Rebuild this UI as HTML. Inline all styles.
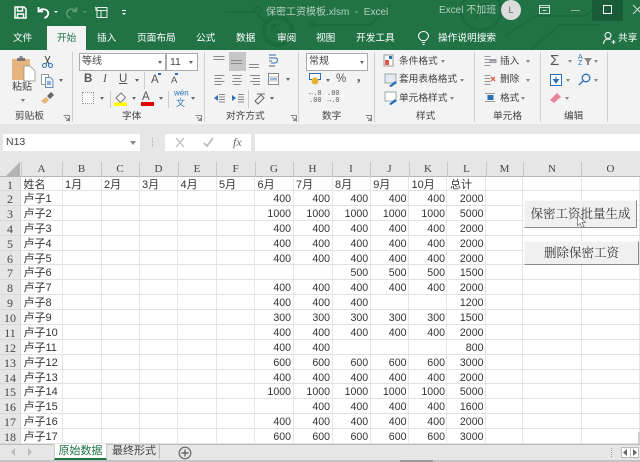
<!DOCTYPE html>
<html lang="zh"><head><meta charset="utf-8"><title>保密工资模板</title>
<style>
*{box-sizing:border-box}
html,body{margin:0;padding:0}
body{width:640px;height:462px;overflow:hidden;position:relative;background:#fff;font-family:"Liberation Sans","Noto Sans CJK SC",sans-serif}
.a{position:absolute;white-space:nowrap}
.t{position:absolute;white-space:nowrap;font-size:9.7px;line-height:14px;color:#444}
.tab{position:absolute;top:32px;font-size:9.7px;line-height:14px;color:#fff;white-space:nowrap}
.sep{position:absolute;top:52px;width:1px;height:70px;background:#cfcfcf}
.ar{position:absolute;width:0;height:0;border-left:2.5px solid transparent;border-right:2.5px solid transparent;border-top:3px solid #666}
.aw{position:absolute;width:0;height:0;border-left:2px solid transparent;border-right:2px solid transparent;border-top:2px solid #fff}
svg{position:absolute;overflow:visible}
#grid{position:absolute;left:0;top:177px;display:grid;width:640px;grid-template-columns:21px 41.5px 39px 38px 38.5px 38.5px 38.5px 38.5px 39px 38.2px 38.3px 38.5px 38.5px 37px 58.7px 58.3px;grid-template-rows:14px repeat(17,14.88px);font-size:10.6px;color:#333}
#grid>b,#grid>i,#grid>u,#grid>s{display:block;border-right:1px solid #e6e6e6;border-bottom:1px solid #e2e2e2;line-height:16px;font-style:normal;font-weight:400;text-decoration:none;white-space:nowrap;overflow:hidden;height:100%}
#grid>b{background:#e6e6e6;border-color:#d8d8d8;text-align:center;font-family:"Liberation Serif",serif;font-size:12px;color:#444}
#grid>u{text-align:right;padding-right:1.5px}
#grid>s{text-align:left;padding-left:2.5px;font-size:11px}
.ch{position:absolute;top:162px;font-family:"Liberation Serif",serif;font-size:11px;line-height:14px;color:#444;text-align:center}
.cl{position:absolute;top:162px;width:1px;height:15px;background:#c8c8c8}
.btn{position:absolute;background:#f0f0f0;border-right:1px solid #8a8a8a;border-bottom:1px solid #8a8a8a;border-top:1px solid #fafafa;border-left:1px solid #fafafa;font-family:"Liberation Serif","Noto Serif CJK SC",serif;color:#333;text-align:center;white-space:nowrap}
</style></head><body>

<!-- title + tabs band -->
<div class="a" style="left:0;top:0;width:640px;height:50px;background:#217346"></div>
<svg style="left:0;top:0" width="640" height="50" fill="none" stroke="#1c6a3f" stroke-width="2">
<circle cx="278" cy="31" r="14" stroke-width="4"/><path d="M272 25l12 12M272 25h8M272 25v8"/>
<circle cx="481" cy="10" r="20" stroke-width="3"/><path d="M474 18l14-14M488 4h-8M488 4v8"/>
<path d="M225 12h30l12 12M310 25h60l20-20M505 36l30-20h50l20-16M530 50l30-25h40M320 12h-20M258 6l-6 6"/>
<circle cx="258" cy="10" r="3"/><circle cx="312" cy="24" r="3"/>
</svg>
<div class="a" style="left:592px;top:0;width:31px;height:21px;background:#1a5c38"></div>

<!-- QAT -->
<svg style="left:14px;top:6px" width="13" height="13" viewBox="0 0 13 13" fill="none" stroke="#fff" stroke-width="1.5"><path d="M1 1h9l2 2v9H1zM3.5 1v4h5V1M3.5 12V8h6v4"/></svg>
<svg style="left:37px;top:6px" width="13" height="13" viewBox="0 0 13 13" fill="none" stroke="#fff" stroke-width="1.8"><path d="M1.5 1v4.5H6M2 5.2C4 2.5 9 2.5 10.8 5.5c1.2 2.5-.2 5.5-3.3 6.5"/></svg>
<div class="aw" style="left:54px;top:11px"></div>
<svg style="left:65px;top:6px" width="13" height="13" viewBox="0 0 13 13" fill="none" stroke="#5a9a78" stroke-width="1.6"><path d="M11.5 1v4.5H7M11 5.2C9 2.5 4 2.5 2.2 5.5c-1.2 2.5.2 5.5 3.3 6.5"/></svg>
<div class="aw" style="left:83px;top:11px;border-top-color:#5a9a78"></div>
<svg style="left:94px;top:6px" width="14" height="12" viewBox="0 0 14 12" fill="none" stroke="#e8f0ea" stroke-width="1"><path d="M3 1.5h10v10H3zM3 4.5h10M7 4.5v7M1 1l2 3 M1 4h2"/></svg>
<svg style="left:122px;top:10px" width="5" height="6" fill="#fff"><rect x="0" y="0" width="4" height="1"/><path d="M0 3h4L2 5z"/></svg>

<!-- title -->
<div class="a" style="left:266px;top:5px;font-size:10px;line-height:15px;color:#b4d0bf">保密工资模板.xlsm&nbsp; -&nbsp; Excel</div>
<div class="a" style="left:439px;top:3px;font-size:10px;line-height:15px;color:#b4d0bf">Excel 不加班</div>
<div class="a" style="left:501px;top:0;width:20px;height:20px;border-radius:50%;background:#dcdcdc;color:#666;font-size:9px;line-height:20px;text-align:center">L</div>
<svg style="left:539px;top:5px" width="12" height="10" fill="none" stroke="#cfe0d6"><path d="M.5.5h10v8H.5zM.5 2.5h10M3.5 5.5h4"/></svg>
<div class="a" style="left:571px;top:10px;width:9px;height:1px;background:#8fb6a0"></div>
<div class="a" style="left:603px;top:5px;width:9px;height:9px;border:1px solid #fff"></div>
<svg style="left:633px;top:5px" width="9" height="10" stroke="#cfe0d6"><path d="M0 0l9 9M9 0l-9 9"/></svg>

<!-- tabs -->
<div class="a" style="left:47px;top:26px;width:39px;height:24px;background:#f3f3f3"></div>
<div class="tab" style="left:13px">文件</div>
<div class="tab" style="left:57px;color:#217346">开始</div>
<div class="tab" style="left:97px">插入</div>
<div class="tab" style="left:137px">页面布局</div>
<div class="tab" style="left:196px">公式</div>
<div class="tab" style="left:236px">数据</div>
<div class="tab" style="left:277px">审阅</div>
<div class="tab" style="left:316px">视图</div>
<div class="tab" style="left:356px">开发工具</div>
<svg style="left:418px;top:31px" width="11" height="14" fill="none" stroke="#fff"><path d="M3.5 9.5C1.5 8 .5 6.500 .5 5a5 4.500 0 0 1 10 0c0 1.500-1 3-3 4.500zM4 11.500h3M4.500 13.500h2"/></svg>
<div class="tab" style="left:438px">操作说明搜索</div>
<svg style="left:603px;top:32px" width="13" height="13" fill="none" stroke="#fff"><circle cx="5" cy="3.500" r="3"/><path d="M.5 12c0-3 2-5 4.500-5 1 0 2 .3 2.500 1M10.500 8v4M8.500 10h4"/></svg>
<div class="tab" style="left:618px">共享</div>

<!-- ribbon -->
<div class="a" style="left:0;top:50px;width:640px;height:74px;background:#f3f3f3"></div>
<div class="sep" style="left:72px"></div><div class="sep" style="left:204px"></div><div class="sep" style="left:298px"></div><div class="sep" style="left:374px"></div><div class="sep" style="left:474px"></div><div class="sep" style="left:540px"></div><div class="sep" style="left:607px"></div>

<!-- clipboard -->
<svg style="left:11px;top:55px" width="25" height="27"><path d="M1 4h18v21H1z" fill="#e6b57e"/><path d="M6 3h8v3H6z" fill="#777"/><path d="M8.500 1h3v2h-3z" fill="#888"/><path d="M13 11h6l5 5v10H13z" fill="#fff" stroke="#888" stroke-width=".7"/></svg>
<div class="t" style="left:12px;top:81px;font-size:10px">粘贴</div>
<div class="ar" style="left:21px;top:99px;border-top-color:#777"></div>
<svg style="left:42px;top:55px" width="11" height="13" fill="none" stroke="#444"><path d="M3 1l4 8M8 1L4 9"/><circle cx="2.500" cy="10.500" r="2" stroke="#2b6fb8"/><circle cx="8.500" cy="10.500" r="2" stroke="#2b6fb8"/></svg>
<svg style="left:41px;top:74px" width="13" height="14" fill="#fff" stroke="#999"><path d="M.5.500h7v10h-7z"/><path d="M4.500 3.500h5l2.500 2.500v7.500H4.500z" fill="#eef3f8" stroke="#6c8fb5"/><path d="M6 8h4M6 10h4" stroke="#2b6fb8"/></svg>
<div class="ar" style="left:59px;top:79px"></div>
<svg style="left:41px;top:92px" width="13" height="12"><path d="M0 9l5-4 3 3-4 4z" fill="#e6b57e"/><path d="M6 4l4-4 3 3-4 4z" fill="#666"/></svg>
<div class="t" style="left:15px;top:110px">剪贴板</div>
<svg style="left:63px;top:115px" width="7" height="7" fill="none" stroke="#888"><path d="M.5.500h6v6M2 2l3.500 3.500M5.500 3v2.500H3"/></svg>

<!-- font -->
<div class="a" style="left:79px;top:53px;width:87px;height:18px;background:#fff;border:1px solid #ababab"></div>
<div class="a" style="left:166px;top:53px;width:32px;height:18px;background:#fff;border:1px solid #ababab"></div>
<div class="t" style="left:82px;top:55px;font-size:10px">等线</div>
<div class="t" style="left:170px;top:55px;font-size:10.500px">11</div>
<div class="ar" style="left:158px;top:61px"></div><div class="ar" style="left:189px;top:61px"></div>
<div class="a" style="left:84px;top:71px;font:bold 11.5px/16px 'Liberation Sans',sans-serif;color:#555">B</div>
<div class="a" style="left:103px;top:71px;font:italic 11.500px/16px 'Liberation Serif',serif;color:#555">I</div>
<div class="a" style="left:119px;top:71px;font:11.500px/16px 'Liberation Sans',sans-serif;color:#555;text-decoration:underline">U</div>
<div class="ar" style="left:135px;top:79px"></div>
<div class="a" style="left:144px;top:72px;width:1px;height:17px;background:#ccc"></div>
<div class="a" style="left:151px;top:72px;font:11.500px/16px 'Liberation Sans',sans-serif;color:#555">A</div><div class="a" style="left:158px;top:73px;width:3px;height:2px;background:#2b6fb8"></div>
<div class="a" style="left:171px;top:73px;font:9.500px/16px 'Liberation Sans',sans-serif;color:#555">A</div><div class="a" style="left:175px;top:73px;width:3px;height:2px;background:#2b6fb8"></div>
<div class="a" style="left:82px;top:92px;width:12px;height:12px;border:1px dotted #999;background:#fbfbfb"></div>
<div class="ar" style="left:100px;top:97px"></div>
<div class="a" style="left:110px;top:91px;width:1px;height:17px;background:#ccc"></div>
<svg style="left:114px;top:91px" width="14" height="14"><path d="M2 7l5-5 4.500 4.500-5 5z" fill="#fff" stroke="#777"/><path d="M0 0" /><rect x="0" y="11.500" width="13" height="3.500" fill="#ff0"/></svg>
<div class="ar" style="left:132px;top:97px"></div>
<div class="a" style="left:142px;top:89px;font:11.500px/16px 'Liberation Sans',sans-serif;color:#555">A</div><div class="a" style="left:141px;top:102px;width:13px;height:3.500px;background:#e60000"></div>
<div class="ar" style="left:159px;top:97px"></div>
<div class="a" style="left:168px;top:91px;width:1px;height:17px;background:#ccc"></div>
<div class="a" style="left:174px;top:89px;font:10px/11px 'Liberation Sans','Noto Sans CJK SC',sans-serif;color:#2b6fb8;transform:scale(.8);transform-origin:0 0">wén</div>
<div class="a" style="left:176px;top:97px;font:9px/11px 'Noto Sans CJK SC',sans-serif;color:#2b6fb8">文</div>
<div class="ar" style="left:191px;top:97px"></div>
<div class="t" style="left:122px;top:110px">字体</div>
<svg style="left:195px;top:115px" width="7" height="7" fill="none" stroke="#888"><path d="M.5.500h6v6M2 2l3.500 3.500M5.500 3v2.500H3"/></svg>

<!-- align -->
<div class="a" style="left:229px;top:52px;width:17px;height:19px;background:#c6c6c6"></div>
<svg style="left:213px;top:55px" width="70" height="14" stroke="#888" fill="none"><path d="M.5 1.500h11M.5 4.500h11M18 5.500h11M18 8.500h11M36 9.500h10M36 12.500h10" stroke-width="1"/></svg>
<svg style="left:268px;top:54px" width="10" height="14" fill="none" stroke="#666"><path d="M1 1h7M1 4h7c2 0 2 5-1 5H3" stroke="#2b6fb8"/><path d="M1 7h3M1 12h6"/></svg>
<svg style="left:214px;top:74px" width="56" height="11" stroke="#888"><path d="M.5 1.500h10M.5 4.500h7M.5 7.500h10M.5 10.500h7M18 1.500h10M19.500 4.500h7M18 7.500h10M19.500 10.500h7M36 1.500h10M39 4.500h7M36 7.500h10M39 10.500h7"/></svg>
<svg style="left:268px;top:73px" width="11" height="12" fill="#fff" stroke="#888"><path d="M.5.500h10v11H.5z"/><path d="M.5 4h10M.5 8h10" stroke="#bbb"/><path d="M2 6h7" stroke="#2b6fb8"/></svg>
<div class="ar" style="left:286px;top:78px"></div>
<svg style="left:214px;top:93px" width="30" height="10" fill="none"><path d="M5 1.500h6M5 4h6M5 6.500h6M5 9h6M24 1.500h6M24 4h6M24 6.500h6M24 9h6" stroke="#888"/><path d="M0 5l4-3v6zM18 2v6l4-3z" fill="#2b6fb8"/></svg>
<div class="a" style="left:248px;top:90px;width:1px;height:18px;background:#ccc"></div>
<svg style="left:254px;top:92px" width="12" height="12" fill="none" stroke="#666"><path d="M1 9l6-6 3 3-6 6zM3 2l8 0"/></svg>
<div class="ar" style="left:270px;top:97px"></div>
<div class="t" style="left:226px;top:110px">对齐方式</div>
<svg style="left:290px;top:115px" width="7" height="7" fill="none" stroke="#888"><path d="M.5.500h6v6M2 2l3.500 3.500M5.500 3v2.500H3"/></svg>

<!-- number -->
<div class="a" style="left:306px;top:53px;width:62px;height:18px;background:#fff;border:1px solid #ababab"></div>
<div class="t" style="left:309px;top:55px;font-size:10px">常规</div>
<div class="ar" style="left:360px;top:61px"></div>
<svg style="left:309px;top:73px" width="12" height="12"><rect x=".5" y=".5" width="11" height="6" fill="#fff" stroke="#2b6fb8"/><circle cx="6" cy="8" r="3.500" fill="#e8b030"/></svg>
<div class="ar" style="left:326px;top:79px"></div>
<div class="a" style="left:336px;top:71px;font:11.500px/16px 'Liberation Sans',sans-serif;color:#555">%</div>
<div class="a" style="left:357px;top:70px;font:bold 14px/16px 'Liberation Serif',serif;color:#555">,</div>
<div class="a" style="left:309px;top:91px;font:7px/7px 'Liberation Mono',monospace;color:#555">←.0<br>.00</div>
<div class="a" style="left:327px;top:91px;font:7px/7px 'Liberation Mono',monospace;color:#555">.00<br>→.0</div>
<div class="t" style="left:322px;top:110px">数字</div>
<svg style="left:365px;top:115px" width="7" height="7" fill="none" stroke="#888"><path d="M.5.500h6v6M2 2l3.500 3.500M5.500 3v2.500H3"/></svg>

<!-- styles -->
<svg style="left:384px;top:55px" width="12" height="12"><rect x="0" y="0" width="9" height="11" fill="#fff" stroke="#999"/><rect x="1" y="5" width="4" height="5" fill="#e2574c"/><rect x="5" y="1" width="3" height="3" fill="#2b6fb8"/></svg>
<svg style="left:385px;top:74px" width="13" height="13"><rect x="0" y="0" width="11" height="9" fill="#e4eaef" stroke="#9aa"/><path d="M4 12l6-5 2 2-6 4z" fill="#2b6fb8"/></svg>
<svg style="left:385px;top:92px" width="13" height="13"><rect x="0" y="0" width="11" height="9" fill="#fff" stroke="#9aa"/><path d="M4 12l6-5 2 2-6 4z" fill="#2b6fb8"/></svg>
<div class="t" style="left:399px;top:55px">条件格式</div><div class="ar" style="left:441px;top:60px;border-top-color:#888"></div>
<div class="t" style="left:399px;top:73px">套用表格格式</div><div class="ar" style="left:460px;top:79px;border-top-color:#888"></div>
<div class="t" style="left:399px;top:92px">单元格样式</div><div class="ar" style="left:450px;top:97px;border-top-color:#888"></div>
<div class="t" style="left:416px;top:110px">样式</div>

<!-- cells -->
<svg style="left:484px;top:55px" width="13" height="12" stroke="#999" fill="none"><path d="M.5 1.500h6M.5 4.500h12M.5 7.500h6M.5 10.500h6"/><path d="M6 5.500h6v2H6z" fill="#bcd"/></svg>
<svg style="left:484px;top:74px" width="13" height="12" stroke="#999" fill="none"><path d="M.5 1.500h6M.5 4.500h6M.5 7.500h6M.5 10.500h6"/><path d="M7 3l4 4M11 3l-4 4" stroke="#e2574c" stroke-width="1.300"/></svg>
<svg style="left:484px;top:91px" width="13" height="13" stroke="#999" fill="none"><path d="M1 2.500h10M1 10.500h10"/><rect x="3.500" y="4" width="6" height="5" fill="#2b6fb8" stroke="none"/></svg>
<div class="t" style="left:500px;top:55px">插入</div><div class="ar" style="left:526px;top:60px;border-top-color:#888"></div>
<div class="t" style="left:500px;top:73px">删除</div><div class="ar" style="left:526px;top:79px;border-top-color:#888"></div>
<div class="t" style="left:500px;top:92px">格式</div><div class="ar" style="left:521px;top:97px;border-top-color:#888"></div>
<div class="t" style="left:493px;top:110px">单元格</div>

<!-- edit -->
<div class="a" style="left:550px;top:52px;font:15px/18px 'Liberation Sans',sans-serif;color:#555">Σ</div><div class="ar" style="left:568px;top:60px;border-top-color:#888"></div>
<div class="a" style="left:578px;top:55px;font:7px/6px 'Liberation Sans',sans-serif;color:#2b6fb8">A<br>Z</div>
<svg style="left:584px;top:58px" width="8" height="7"><path d="M0 0h8L5 4v3H3V4z" fill="#888"/></svg><div class="ar" style="left:594px;top:60px;border-top-color:#888"></div>
<svg style="left:550px;top:74px" width="12" height="12"><rect x=".5" y=".5" width="11" height="11" fill="#fff" stroke="#2b6fb8"/><path d="M6 2.500v5M3.500 5.500L6 9l2.500-3.500z" fill="#2b6fb8" stroke="#2b6fb8"/></svg><div class="ar" style="left:566px;top:79px;border-top-color:#888"></div>
<svg style="left:578px;top:73px" width="13" height="13" fill="none" stroke="#2b6fb8" stroke-width="1.300"><circle cx="8" cy="5" r="3.800"/><path d="M5 8l-4 4"/></svg><div class="ar" style="left:594px;top:79px;border-top-color:#888"></div>
<svg style="left:550px;top:92px" width="12" height="12"><path d="M0 8l7-7 4 4-7 6z" fill="#e8849a"/></svg><div class="ar" style="left:565px;top:97px;border-top-color:#888"></div>
<div class="t" style="left:564px;top:110px">编辑</div>

<!-- formula bar -->
<div class="a" style="left:0;top:124px;width:640px;height:38px;background:#e6e6e6"></div>
<div class="a" style="left:3px;top:134px;width:137px;height:17px;background:#fff"></div>
<div class="a" style="left:6px;top:135px;font:10.500px/15px 'Liberation Sans',sans-serif;color:#444">N13</div>
<div class="ar" style="left:130px;top:141px;border-left-width:3px;border-right-width:3px;border-top:4px solid #888"></div>
<div class="a" style="left:152px;top:138px;width:1px;height:9px;border-left:1px dotted #aaa"></div>
<div class="a" style="left:165px;top:134px;width:86px;height:17px;background:#fff"></div>
<svg style="left:175px;top:138px" width="10" height="9" stroke="#bbb" stroke-width="1.200"><path d="M1 0l8 9M9 0L1 9"/></svg>
<svg style="left:203px;top:138px" width="11" height="9" stroke="#bbb" stroke-width="1.800" fill="none"><path d="M1 5l3 3 6-8"/></svg>
<div class="a" style="left:233px;top:134px;font:italic 12px/16px 'Liberation Serif',serif;color:#666">fx</div>
<div class="a" style="left:255px;top:134px;width:385px;height:17px;background:#fff"></div>

<!-- column headers -->
<div class="a" style="left:0;top:160px;width:640px;height:17px;background:#e6e6e6;border-bottom:1px solid #b5b5b5"></div>
<svg style="left:6px;top:162px" width="14" height="14"><path d="M14 0v14H0z" fill="#b4b4b4"/></svg>
<div class="cl" style="left:21px"></div><div class="cl" style="left:62px"></div><div class="cl" style="left:101px"></div><div class="cl" style="left:139px"></div><div class="cl" style="left:178px"></div><div class="cl" style="left:216px"></div><div class="cl" style="left:255px"></div><div class="cl" style="left:293px"></div><div class="cl" style="left:332px"></div><div class="cl" style="left:370px"></div><div class="cl" style="left:409px"></div><div class="cl" style="left:447px"></div><div class="cl" style="left:486px"></div><div class="cl" style="left:523px"></div><div class="cl" style="left:581px"></div>
<div class="ch" style="left:21px;width:41px">A</div><div class="ch" style="left:62px;width:39px">B</div><div class="ch" style="left:101px;width:38px">C</div><div class="ch" style="left:139px;width:39px">D</div><div class="ch" style="left:178px;width:38px">E</div><div class="ch" style="left:216px;width:39px">F</div><div class="ch" style="left:255px;width:38px">G</div><div class="ch" style="left:293px;width:39px">H</div><div class="ch" style="left:332px;width:38px">I</div><div class="ch" style="left:370px;width:39px">J</div><div class="ch" style="left:409px;width:38px">K</div><div class="ch" style="left:447px;width:39px">L</div><div class="ch" style="left:486px;width:37px">M</div><div class="ch" style="left:523px;width:58px">N</div><div class="ch" style="left:581px;width:59px">O</div>

<!-- grid -->
<div id="grid">
<b>1</b><s>姓名</s><s>1月</s><s>2月</s><s>3月</s><s>4月</s><s>5月</s><s>6月</s><s>7月</s><s>8月</s><s>9月</s><s>10月</s><s>总计</s><i></i><i></i><i></i>
<b>2</b><s>卢子1</s><i></i><i></i><i></i><i></i><i></i><u>400</u><u>400</u><u>400</u><u>400</u><u>400</u><u>2000</u><i></i><i></i><i></i>
<b>3</b><s>卢子2</s><i></i><i></i><i></i><i></i><i></i><u>1000</u><u>1000</u><u>1000</u><u>1000</u><u>1000</u><u>5000</u><i></i><i></i><i></i>
<b>4</b><s>卢子3</s><i></i><i></i><i></i><i></i><i></i><u>400</u><u>400</u><u>400</u><u>400</u><u>400</u><u>2000</u><i></i><i></i><i></i>
<b>5</b><s>卢子4</s><i></i><i></i><i></i><i></i><i></i><u>400</u><u>400</u><u>400</u><u>400</u><u>400</u><u>2000</u><i></i><i></i><i></i>
<b>6</b><s>卢子5</s><i></i><i></i><i></i><i></i><i></i><u>400</u><u>400</u><u>400</u><u>400</u><u>400</u><u>2000</u><i></i><i></i><i></i>
<b>7</b><s>卢子6</s><i></i><i></i><i></i><i></i><i></i><i></i><i></i><u>500</u><u>500</u><u>500</u><u>1500</u><i></i><i></i><i></i>
<b>8</b><s>卢子7</s><i></i><i></i><i></i><i></i><i></i><u>400</u><u>400</u><u>400</u><u>400</u><u>400</u><u>2000</u><i></i><i></i><i></i>
<b>9</b><s>卢子8</s><i></i><i></i><i></i><i></i><i></i><u>400</u><u>400</u><u>400</u><i></i><i></i><u>1200</u><i></i><i></i><i></i>
<b>10</b><s>卢子9</s><i></i><i></i><i></i><i></i><i></i><u>300</u><u>300</u><u>300</u><u>300</u><u>300</u><u>1500</u><i></i><i></i><i></i>
<b>11</b><s>卢子10</s><i></i><i></i><i></i><i></i><i></i><u>400</u><u>400</u><u>400</u><u>400</u><u>400</u><u>2000</u><i></i><i></i><i></i>
<b>12</b><s>卢子11</s><i></i><i></i><i></i><i></i><i></i><u>400</u><u>400</u><i></i><i></i><i></i><u>800</u><i></i><i></i><i></i>
<b>13</b><s>卢子12</s><i></i><i></i><i></i><i></i><i></i><u>600</u><u>600</u><u>600</u><u>600</u><u>600</u><u>3000</u><i></i><i></i><i></i>
<b>14</b><s>卢子13</s><i></i><i></i><i></i><i></i><i></i><u>400</u><u>400</u><u>400</u><u>400</u><u>400</u><u>2000</u><i></i><i></i><i></i>
<b>15</b><s>卢子14</s><i></i><i></i><i></i><i></i><i></i><u>1000</u><u>1000</u><u>1000</u><u>1000</u><u>1000</u><u>5000</u><i></i><i></i><i></i>
<b>16</b><s>卢子15</s><i></i><i></i><i></i><i></i><i></i><i></i><u>400</u><u>400</u><u>400</u><u>400</u><u>1600</u><i></i><i></i><i></i>
<b>17</b><s>卢子16</s><i></i><i></i><i></i><i></i><i></i><u>400</u><u>400</u><u>400</u><u>400</u><u>400</u><u>2000</u><i></i><i></i><i></i>
<b>18</b><s>卢子17</s><i></i><i></i><i></i><i></i><i></i><u>600</u><u>600</u><u>600</u><u>600</u><u>600</u><u>3000</u><i></i><i></i><i></i>
</div>

<!-- buttons -->
<div class="btn" style="left:524px;top:200px;width:113px;height:28px;font-size:12.500px;line-height:26px">保密工资批量生成</div>
<div class="btn" style="left:524px;top:241px;width:115px;height:24px;font-size:12.500px;line-height:22px">删除保密工资</div>
<svg style="left:577px;top:214px" width="10" height="15"><path d="M.5.500v11l2.500-2 2 4 2-1-2-4h3.500z" fill="#fff" stroke="#888"/></svg>

<!-- sheet bar -->
<div class="a" style="left:0;top:444px;width:640px;height:16px;background:#e6e6e6;border-top:1px solid #bcbcbc"></div>
<div class="a" style="left:0;top:460px;width:640px;height:2px;background:#c4c4c4"></div>
<div class="a" style="left:400px;top:460px;width:33px;height:2px;background:#9a9a9a"></div>
<svg style="left:11px;top:448px" width="22" height="8" fill="#bbb"><path d="M4 0v8L0 4zM17 0v8l4-4z"/></svg>
<div class="a" style="left:54px;top:444px;width:53px;height:16px;background:#fff;border-bottom:2px solid #217346;border-left:1px solid #ccc;border-right:1px solid #ccc;font-size:11px;line-height:14px;color:#217346;text-align:center">原始数据</div>
<div class="a" style="left:112px;top:444px;font-size:11px;line-height:15px;color:#444">最终形式</div>
<div class="a" style="left:159px;top:445px;width:1px;height:14px;background:#bbb"></div>
<svg style="left:178px;top:446px" width="14" height="14" fill="none" stroke="#666"><circle cx="7" cy="7" r="5.800" stroke-width="1.200"/><path d="M3.500 7h7M7 3.500v7" stroke-width="1.400"/></svg>
<div class="a" style="left:611px;top:448px;width:1px;height:9px;border-left:1px dotted #999"></div>
<div class="a" style="left:621px;top:447px;width:18px;height:11px;background:#fff;border:1px solid #bbb"></div>
<div class="a" style="left:630px;top:447px;width:1px;height:11px;background:#bbb"></div>
<svg style="left:623px;top:449px" width="14" height="7" fill="#666"><path d="M4 0v7L0 3.500zM10 0v7l4-3.500z"/></svg>
<div class="a" style="left:638px;top:432px;width:2px;height:12px;background:#cfcfcf"></div>
</body></html>
